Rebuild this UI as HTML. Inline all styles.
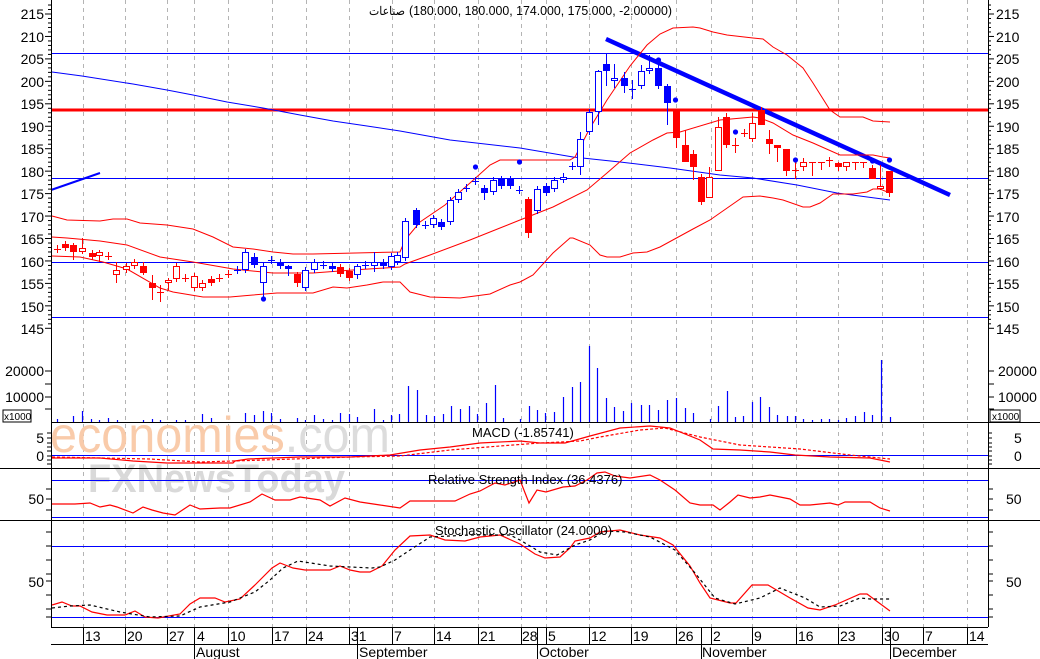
<!DOCTYPE html>
<html><head><meta charset="utf-8"><style>
html,body{margin:0;padding:0;background:#fff;width:1040px;height:659px;overflow:hidden}
svg{display:block}
text{font-family:"Liberation Sans","Noto Sans CJK SC",sans-serif;fill:#000}
.ax{font-size:14px}
.lb{font-size:13px}
</style></head><body>
<svg id="s" width="1040" height="659" viewBox="0 0 1040 659" xmlns="http://www.w3.org/2000/svg">
<g id="grid" stroke="#b4b4b4" stroke-dasharray="4,4" stroke-width="1"></g>
<text x="50" y="452" textLength="340" lengthAdjust="spacingAndGlyphs" style="font-size:50px;fill:#f9cbaa">economies<tspan style="fill:#dcdcdc">.com</tspan></text>
<text x="88" y="492" textLength="257" lengthAdjust="spacingAndGlyphs" style="font-size:40px;font-weight:bold;fill:#d9d9d9">FXNewsToday</text>
<g id="hl"></g>
<g id="lines" fill="none"></g>
<g id="cand"></g>
<g id="axes" stroke="#000" stroke-width="1"></g>
<g id="ticks" stroke="#000" stroke-width="1"></g>
<text x="369" y="15" textLength="36" lengthAdjust="spacingAndGlyphs" style="font-size:12px">صناعات</text>
<text x="409" y="15" textLength="263" lengthAdjust="spacingAndGlyphs" style="font-size:12.5px">(180.000, 180.000, 174.000, 175.000, -2.00000)</text>
<text class="lb" x="472" y="437">MACD (-1.85741)</text>
<text class="lb" x="428" y="484">Relative Strength Index (36.4376)</text>
<text class="lb" x="435" y="535">Stochastic Oscillator (24.0000)</text>
<g class="ax" text-anchor="end">
<text x="44" y="19">215</text><text x="44" y="42">210</text><text x="44" y="64">205</text><text x="44" y="87">200</text><text x="44" y="109">195</text><text x="44" y="132">190</text><text x="44" y="154">185</text><text x="44" y="177">180</text><text x="44" y="199">175</text><text x="44" y="222">170</text><text x="44" y="244">165</text><text x="44" y="267">160</text><text x="44" y="289">155</text><text x="44" y="312">150</text><text x="44" y="334">145</text>
<text x="44" y="376">20000</text><text x="44" y="402">10000</text>
<text x="44" y="443">5</text><text x="44" y="461">0</text>
<text x="44" y="504">50</text><text x="44" y="587">50</text>
</g>
<g class="ax">
<text x="996" y="19">215</text><text x="996" y="42">210</text><text x="996" y="64">205</text><text x="996" y="87">200</text><text x="996" y="109">195</text><text x="996" y="132">190</text><text x="996" y="154">185</text><text x="996" y="177">180</text><text x="996" y="199">175</text><text x="996" y="222">170</text><text x="996" y="244">165</text><text x="996" y="267">160</text><text x="996" y="289">155</text><text x="996" y="312">150</text><text x="996" y="334">145</text>
<text x="998" y="376">20000</text><text x="998" y="402">10000</text>
<text x="1014" y="443">5</text><text x="1014" y="461">0</text>
<text x="1006" y="504">50</text><text x="1006" y="587">50</text>
</g>
<rect x="3" y="410" width="28" height="12" fill="#fff" stroke="#000"/>
<text x="4" y="420" style="font-size:10px">x1000</text>
<rect x="990" y="410" width="30" height="12" fill="#fff" stroke="#000"/>
<text x="992" y="420" style="font-size:10px">x1000</text>
<g class="ax" id="dates">
<text x="85" y="641">13</text><text x="127" y="641">20</text><text x="169" y="641">27</text><text x="197" y="641">4</text><text x="230" y="641">10</text><text x="274" y="641">17</text><text x="308" y="641">24</text><text x="351" y="641">31</text><text x="394" y="641">7</text><text x="436" y="641">14</text><text x="480" y="641">21</text><text x="522" y="641">28</text><text x="548" y="641">5</text><text x="591" y="641">12</text><text x="633" y="641">19</text><text x="678" y="641">26</text><text x="713" y="641">2</text><text x="754" y="641">9</text><text x="798" y="641">16</text><text x="840" y="641">23</text><text x="884" y="641">30</text><text x="925" y="641">7</text><text x="969" y="641">14</text>
<text x="196" y="657">August</text><text x="359" y="657">September</text><text x="539" y="657">October</text><text x="702" y="657">November</text><text x="892" y="657">December</text>
</g>
</svg>
<script>
var NS="http://www.w3.org/2000/svg";
function el(p,t,a){var e=document.createElementNS(NS,t);for(var k in a)e.setAttribute(k,a[k]);document.getElementById(p).appendChild(e);return e;}
var gx=[83,125,167,194,228,272,306,349,392,434,478,521,546,589,631,676,711,752,796,838,882,923,967];
gx.forEach(function(x){el('grid','line',{x1:x+.5,y1:0,x2:x+.5,y2:627});el('ticks','line',{x1:x+.5,y1:627,x2:x+.5,y2:644});});
[194,357,537,701,890].forEach(function(x){el('ticks','line',{x1:x+.5,y1:627,x2:x+.5,y2:659});});
function h(y,c,w,x1,x2){el('hl','line',{x1:x1||51,y1:y,x2:x2||988,y2:y,stroke:c,'stroke-width':w||1});}
h(53.5,'#00f');h(178.5,'#00f');h(262.5,'#00f');h(317.5,'#00f');h(110,'#f00',3);
h(455.5,'#00f');h(480.5,'#00f');h(517.5,'#00f');h(546.5,'#00f');h(617.5,'#00f');
function L(x1,y1,x2,y2){el('axes','line',{x1:x1,y1:y1,x2:x2,y2:y2});}
L(51.5,0,51.5,627);L(988.5,0,988.5,627);L(51,422.5,1040,422.5);L(0,468.5,1040,468.5);L(0,520.5,1040,520.5);
L(51,627.5,988,627.5);L(51,644.5,988,644.5);
for(var p=145;p<=217;p++){var y=14+(215-p)*4.49;var len=(p%5==0)?6:3;L(51-len,y,51,y);L(988,y,988+len,y);}
[371,384,397,409].forEach(function(y){L(45,y,51,y);L(988,y,994,y);});
[433,438,443,447,451,456,460,464].forEach(function(y){L(47,y,51,y);L(988,y,992,y);});
[499,510,489].forEach(function(y){L(46,y,51,y);L(988,y,993,y);});
[532,546,560,574,581,595,609,617].forEach(function(y){L(46,y,51,y);L(988,y,993,y);});
function pl(pts,c,w,dash){var a={points:pts.map(function(p){return p.join(',')}).join(' '),stroke:c,'stroke-width':w||1};if(dash)a['stroke-dasharray']=dash;el('lines','polyline',a);}
pl([[52,72],[82,76],[133,84],[167,90],[193,95],[227,102],[263,108],[300,115],[333,121],[367,126],[400,131],[450,140],[520,148],[573,157],[620,162],[670,168],[720,175],[753,178],[797,185],[837,193],[890,200]],'#00f');
pl([[51,190],[100,173]],'#00f',2);
pl([[606,39],[950,195]],'#00f',4.5);
pl([[52,216],[67,220],[100,221],[113,219],[127,219],[140,223],[167,225],[193,229],[213,237],[233,247],[253,249],[273,252],[293,254],[313,254],[400,252],[405,240],[420,222],[445,205],[470,183],[490,165],[500,160],[570,160],[575,157],[590,128],[607,100],[630,66],[647,45],[660,34],[673,28],[693,27],[700,28],[713,32],[727,35],[753,38],[763,39],[773,47],[787,55],[803,68],[813,83],[830,110],[840,117],[863,117],[873,121],[890,122]],'#f00');
pl([[52,237],[67,238],[100,241],[127,245],[160,257],[193,262],[233,269],[273,273],[313,273],[353,270],[400,267],[405,264],[430,255],[470,240],[500,228],[520,220],[553,207],[587,190],[607,173],[630,153],[653,140],[667,133],[680,132],[720,120],[753,117],[760,118],[773,123],[793,135],[813,143],[840,155],[873,155],[883,157],[890,158]],'#f00');
pl([[52,256],[80,257],[103,262],[127,269],[160,288],[173,292],[203,297],[230,297],[253,295],[277,293],[313,293],[333,287],[347,288],[367,285],[383,282],[400,282],[410,292],[430,297],[460,298],[490,294],[510,285],[520,282],[533,275],[553,253],[570,238],[573,238],[590,245],[600,255],[607,257],[620,257],[633,253],[647,252],[660,247],[693,229],[710,220],[720,213],[743,197],[760,196],[773,198],[783,200],[803,207],[810,207],[820,203],[833,194],[853,194],[867,192],[873,189],[880,189],[890,193]],'#f00');
pl([[52,458],[100,458],[133,461],[167,463],[233,463],[235,461],[248,459],[300,457],[350,457],[390,455],[420,450],[450,447],[480,443],[520,441],[540,443],[565,443],[590,436],[620,428],[650,426],[670,428],[700,440],[713,449],[740,450],[770,452],[795,455],[830,457],[870,458],[890,462]],'#f00',1.2);
pl([[52,457],[150,459],[200,462],[265,460],[350,457],[400,456],[450,450],[500,446],[540,443],[580,441],[600,437],[640,430],[665,428],[700,437],[740,445],[800,449],[850,455],[890,459]],'#f00',1.2,'3,2');
pl([[52,504],[75,504],[90,503],[100,507],[110,505],[117,507],[133,513],[143,507],[152,510],[163,513],[175,515],[190,505],[200,509],[220,508],[230,508],[250,502],[262,494],[275,500],[290,500],[300,497],[320,500],[330,506],[345,498],[360,502],[380,505],[400,508],[410,501],[440,501],[455,501],[470,494],[480,491],[495,483],[505,485],[520,480],[529,503],[537,490],[546,492],[563,487],[575,486],[587,480],[597,473],[605,472],[615,476],[630,478],[650,475],[660,480],[675,490],[690,503],[700,505],[713,505],[720,510],[730,502],[738,495],[750,498],[760,497],[770,495],[780,497],[790,499],[800,505],[810,505],[830,503],[838,505],[845,502],[870,502],[875,505],[880,508],[890,511]],'#f00',1.2);
pl([[52,605],[62,602],[72,606],[80,606],[92,612],[107,615],[125,615],[135,611],[145,617],[158,618],[180,614],[190,604],[200,598],[215,598],[225,602],[240,599],[255,585],[272,568],[280,563],[293,568],[305,570],[330,570],[340,566],[350,570],[360,572],[370,572],[382,566],[395,550],[410,536],[430,535],[445,540],[465,541],[480,537],[500,535],[520,544],[535,554],[545,558],[560,557],[570,548],[575,541],[590,538],[600,532],[620,530],[640,535],[660,538],[673,545],[690,566],[700,583],[710,598],[730,603],[736,603],[752,585],[768,585],[790,598],[808,608],[820,610],[835,605],[860,594],[867,594],[890,611]],'#f00',1.2);
pl([[52,608],[70,606],[90,605],[120,612],[150,617],[180,616],[200,607],[230,602],[255,592],[270,580],[283,568],[298,561],[330,566],[350,567],[372,568],[380,567],[395,560],[410,550],[430,537],[470,535],[510,535],[520,540],[540,552],[557,555],[575,545],[590,540],[605,531],[625,532],[650,537],[675,550],[695,573],[715,598],[735,604],[760,598],[780,588],[805,598],[820,607],[840,606],[860,598],[870,599],[890,599]],'#000',1.2,'3,3');
var vol=[[57,419],[73,416],[82,411],[91,419],[99,420],[108,418],[117,420],[143,420],[152,419],[160,420],[176,420],[185,420],[202,414],[211,418],[245,413],[254,415],[263,411],[271,413],[280,419],[297,418],[305,420],[314,415],[323,419],[332,420],[340,413],[349,414],[357,417],[374,409],[383,420],[391,415],[399,414],[408,386],[417,390],[426,415],[434,416],[443,414],[451,406],[460,409],[469,406],[477,414],[486,403],[495,385],[503,418],[520,419],[529,406],[537,410],[545,413],[554,412],[563,397],[572,387],[580,382],[589,346],[597,368],[606,398],[614,407],[623,411],[631,403],[641,405],[649,405],[658,410],[667,400],[676,398],[685,408],[693,413],[710,419],[718,406],[727,391],[735,417],[743,416],[752,402],[760,397],[769,407],[777,415],[787,416],[795,416],[803,419],[812,420],[821,419],[829,419],[838,420],[846,418],[855,416],[864,412],[872,415],[881,360],[890,417]];
vol.forEach(function(v){el('lines','line',{x1:v[0]+.5,y1:v[1],x2:v[0]+.5,y2:422,stroke:'#00f','stroke-width':1.2});});
var C=[[57,'rc',249],[65,'rf',244,248],[73,'rf',245,252,243,260],[82,'rh',248,252,238,254],[92,'rf',253,257],[99,'rh',252,256,250,262],[108,'rc',256],[116,'rh',270,275,262,283],[126,'rh',266,270],[134,'rh',262,266],[143,'rf',266,273,262,275],[152,'rf',283,288,275,300],[160,'rc',292,285,302],[168,'rh',280,283,278,290],[176,'rh',266,279],[185,'rc',278],[194,'rh',276,288],[202,'rh',283,288],[211,'rf',279,283],[219,'rc',278],[228,'rc',274],
[237,'bc',270],[245,'bh',252,270],[254,'bf',257,265,253,268],[263,'bh',266,283,262,297],[271,'bc',260],[280,'bf',262,266],[288,'bf',266,269,265,276],[297,'rf',274,283,272,287],[305,'bh',270,288],[314,'bh',262,270],[323,'bc',265],[332,'bf',266,269],[340,'rf',267,274],[349,'rf',271,278],[357,'bh',266,275,264,279],[365,'bc',265],[374,'bh',262,266,252,272],[383,'bf',262,266],[391,'bh',256,267],[397,'bh',255,262],[405,'bh',221,258],[416,'bf',210,225,208,228],[425,'bc',225],[433,'bh',218,225],[441,'bf',222,227],[450,'bh',200,222],[458,'bh',192,200],[466,'bc',188],[475,'bc',181],[484,'bf',188,193,185,200],[493,'bh',180,192],[501,'bf',179,186],[510,'bf',179,186],[519,'bc',190],[528,'rf',199,233,197,238],[537,'bh',189,211],[546,'bf',186,193],[554,'bh',180,189],[563,'bh',177,180,173,183],[572,'bc',166],[580,'bh',139,167,132,175],[589,'bh',112,132],[598,'bh',71,112,70,125],[606,'bf',64,71,53,86],[614,'bh',78,81,64,88],[624,'bf',78,86,72,93],[632,'bc',89,80,99],[641,'bh',71,86,65,89],[649,'bh',68,71,55,74],[658,'bf',68,86],[667,'bf',86,103,84,125],
[676,'rf',110,138,110,148],[685,'rf',145,162,130,162],[693,'rf',154,167,150,180],[701,'rf',177,202],[709,'rh',177,198,167,198],[718,'rh',127,171,117,171],[726,'rf',117,145,113,148],[735,'rc',145,138,153],[744,'rc',133],[752,'rh',123,139,113,142],[761,'rf',110,125,107,125],[769,'rf',139,144,130,154],[777,'rf',145,148,145,162],[786,'rf',149,171,149,176],[795,'rc',170,160,179],[803,'rh',162,167,158,171],[812,'rc',162,162,176],[821,'rc',162,162,170],[829,'rc',160,157,167],[838,'rf',163,167,162,171],[846,'rh',162,167,162,171],[855,'rc',162,162,170],[863,'rc',162,162,168],[872,'rf',168,179,165,179],[880,'rh',186,189,165,190],[889,'rf',171,193,171,197]];
C.forEach(function(c){var x=c[0],t=c[1],col=t[0]=='r'?'#f00':'#00f';
 if(t[1]=='c'){var y=c[2],wt=c.length>3?c[3]:y-4,wb=c.length>4?c[4]:y+4;
  el('cand','line',{x1:x+.5,y1:wt,x2:x+.5,y2:wb,stroke:col});el('cand','line',{x1:x-3,y1:y+.5,x2:x+4,y2:y+.5,stroke:col});return;}
 var a=c[2],b=c[3],wt=c.length>4?c[4]:a-3,wb=c.length>5?c[5]:b+3;
 el('cand','line',{x1:x+.5,y1:wt,x2:x+.5,y2:wb,stroke:col});
 if(t[1]=='f')el('cand','rect',{x:x-3,y:a,width:7,height:Math.max(b-a,1),fill:col});
 else el('cand','rect',{x:x-2.5,y:a+.5,width:6,height:Math.max(b-a-1,1),fill:'#fff',stroke:col});});
[[263,299],[475,167],[519,162],[658,60],[675,100],[735,132],[795,160],[872,161],[889,160]].forEach(function(d){el('cand','circle',{cx:d[0]+.5,cy:d[1],r:2.6,fill:'#00f'});});
</script>
</body></html>
